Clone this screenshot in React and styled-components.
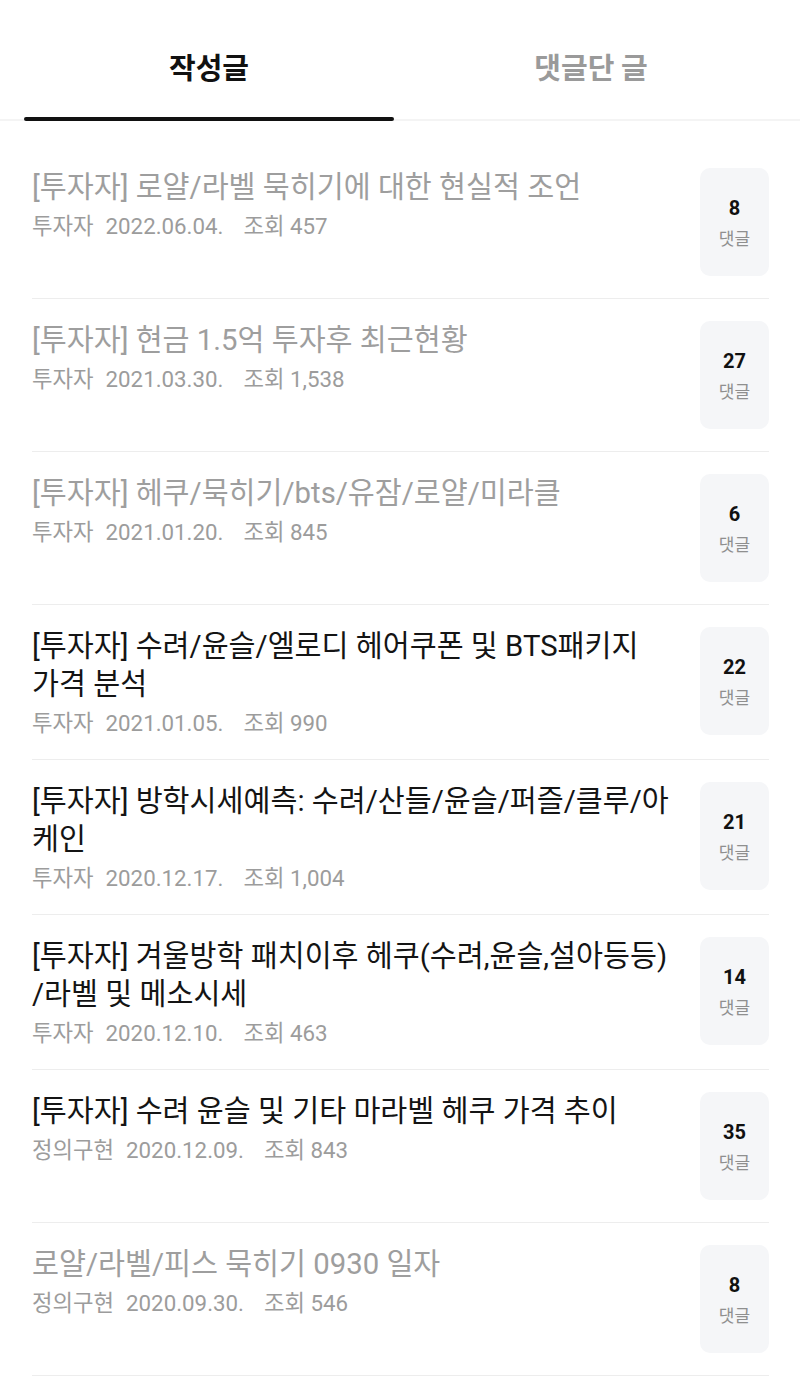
import React from "react";
import styled, { createGlobalStyle } from "styled-components";

const Global = createGlobalStyle`
  html, body { margin: 0; padding: 0; background: #fff; }
  body { font-family: "Roboto", "Noto Sans CJK KR", sans-serif; -webkit-font-smoothing: antialiased; }
  * { box-sizing: border-box; }
`;

const Page = styled.div`
  width: 800px;
  background: #fff;
`;

const TabBar = styled.div`
  display: flex;
  gap: 12px;
  padding: 0 24px;
  height: 121px;
  border-bottom: 2px solid #f4f4f4;
`;

const Tab = styled.div`
  flex: 1;
  display: flex;
  align-items: center;
  justify-content: center;
  position: relative;
  font-family: "Noto Sans CJK KR", sans-serif;
  font-size: 29px;
  font-weight: 700;
  color: ${(p) => (p.$active ? "#111" : "#9a9a9a")};
  padding-top: 12px;
  &::after {
    content: "";
    display: ${(p) => (p.$active ? "block" : "none")};
    position: absolute;
    left: 0;
    right: 0;
    bottom: -2px;
    height: 4px;
    border-radius: 2px;
    background: #111;
  }
`;

const List = styled.div`
  padding-top: 25px;
`;

const Item = styled.div`
  display: flex;
  align-items: flex-start;
  gap: 28px;
  margin: 0 31px 0 32px;
  padding: 22px 0;
  border-bottom: 1px solid #ededed;
`;

const TextCol = styled.div`
  flex: 1;
  min-width: 0;
`;

const Title = styled.div`
  font-family: "Roboto", "Noto Sans CJK KR", sans-serif;
  font-size: 29.3px;
  line-height: 38px;
  color: ${(p) => (p.$read ? "#9e9e9e" : "#141414")};
  word-break: normal;
  line-break: anywhere;
`;

const Meta = styled.div`
  margin-top: 7px;
  display: flex;
  gap: 12px;
  font-family: "Roboto", "Noto Sans CJK KR", sans-serif;
  font-size: 22.3px;
  line-height: 27px;
  color: #9c9c9c;
`;

const DateText = styled.span`
  margin-right: 8px;
`;

const CommentBox = styled.div`
  flex: none;
  width: 69px;
  height: 108px;
  border-radius: 10px;
  background: #f5f6f8;
  display: flex;
  flex-direction: column;
  align-items: center;
  justify-content: center;
  gap: 5px;
`;

const Count = styled.div`
  font-family: "Roboto", sans-serif;
  font-size: 20px;
  line-height: 26px;
  font-weight: 700;
  color: #111;
`;

const Label = styled.div`
  font-family: "Noto Sans CJK KR", sans-serif;
  font-size: 17px;
  line-height: 24px;
  color: #8f8f8f;
`;

const posts = [
  { title: "[투자자] 로얄/라벨 묵히기에 대한 현실적 조언", author: "투자자", date: "2022.06.04.", views: "457", comments: 8, read: true },
  { title: "[투자자] 현금 1.5억 투자후 최근현황", author: "투자자", date: "2021.03.30.", views: "1,538", comments: 27, read: true },
  { title: "[투자자] 헤쿠/묵히기/bts/유잠/로얄/미라클", author: "투자자", date: "2021.01.20.", views: "845", comments: 6, read: true },
  { title: "[투자자] 수려/윤슬/엘로디 헤어쿠폰 및 BTS패키지 가격 분석", author: "투자자", date: "2021.01.05.", views: "990", comments: 22, read: false },
  { title: "[투자자] 방학시세예측: 수려/산들/윤슬/퍼즐/클루/아케인", author: "투자자", date: "2020.12.17.", views: "1,004", comments: 21, read: false },
  { title: "[투자자] 겨울방학 패치이후 헤쿠(수려,윤슬,설아등등)/라벨 및 메소시세", author: "투자자", date: "2020.12.10.", views: "463", comments: 14, read: false },
  { title: "[투자자] 수려 윤슬 및 기타 마라벨 헤쿠 가격 추이", author: "정의구현", date: "2020.12.09.", views: "843", comments: 35, read: false },
  { title: "로얄/라벨/피스 묵히기 0930 일자", author: "정의구현", date: "2020.09.30.", views: "546", comments: 8, read: true },
];

export default function App() {
  return (
    <Page>
      <Global />
      <TabBar>
        <Tab $active>작성글</Tab>
        <Tab>댓글단 글</Tab>
      </TabBar>
      <List>
        {posts.map((p, i) => (
          <Item key={i}>
            <TextCol>
              <Title $read={p.read}>{p.title}</Title>
              <Meta>
                <span>{p.author}</span>
                <DateText>{p.date}</DateText>
                <span>조회 {p.views}</span>
              </Meta>
            </TextCol>
            <CommentBox>
              <Count>{p.comments}</Count>
              <Label>댓글</Label>
            </CommentBox>
          </Item>
        ))}
      </List>
    </Page>
  );
}
